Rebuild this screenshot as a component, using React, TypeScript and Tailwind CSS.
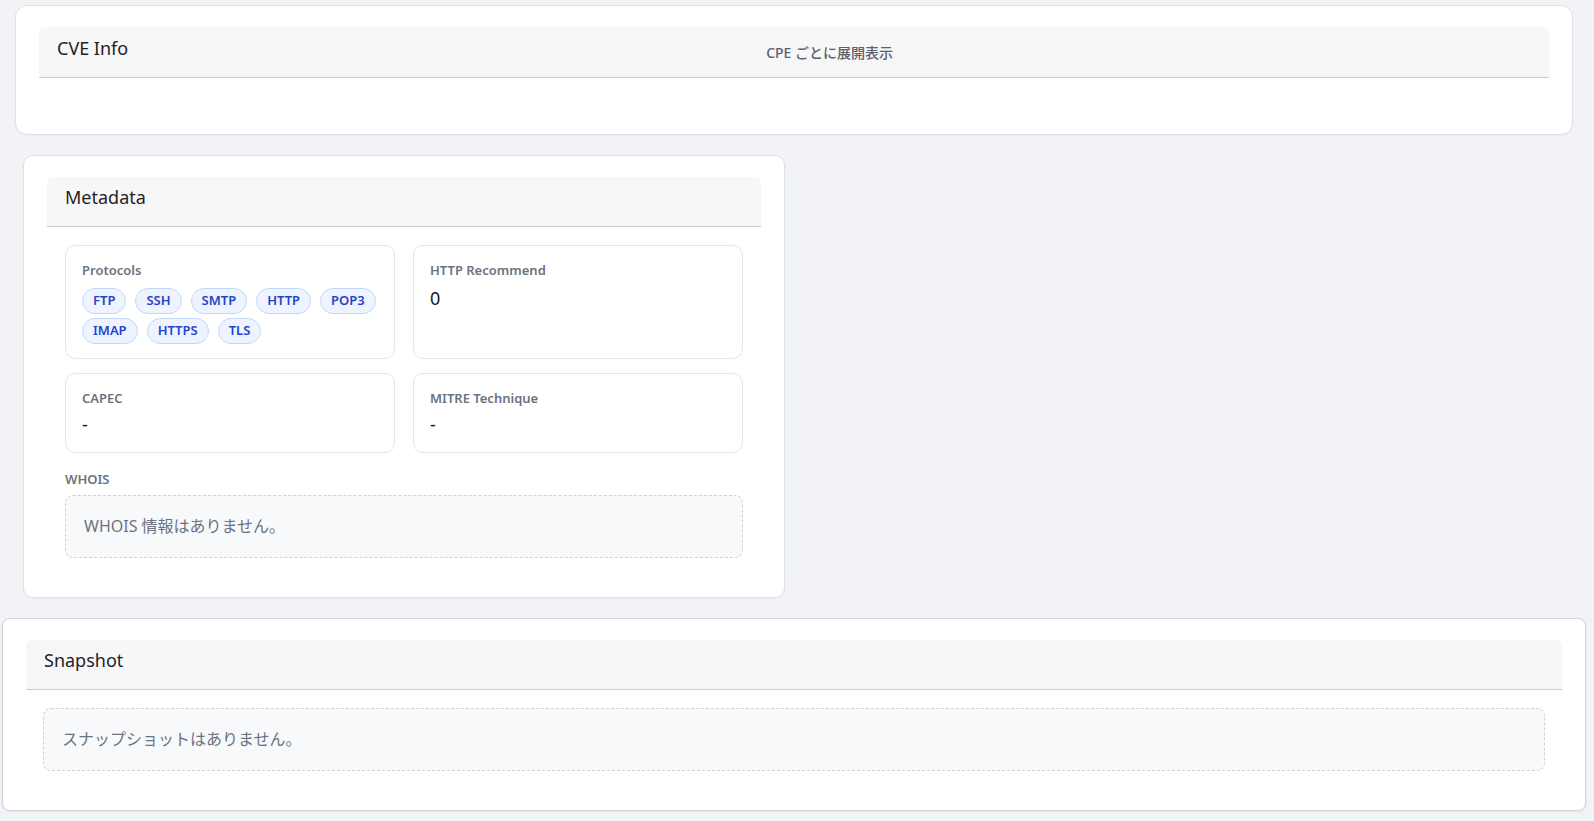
import React from "react";

const font = { fontFamily: '"Noto Sans", "Noto Sans CJK JP", sans-serif' };

function Header({ title, extra, cve }: { title: string; extra?: React.ReactNode; cve?: boolean }) {
  return (
    <div
      className={`flex items-start bg-[#f7f7f7] border-b border-[#cdcdcd] rounded-t-[6px] px-[18px] ${
        cve ? "h-[51px]" : "h-[50px]"
      }`}
    >
      <div className={`text-[18px] leading-7 text-[#1f2328] ${cve ? "mt-[7px]" : "mt-[6px]"}`}>{title}</div>
      {extra}
    </div>
  );
}

function InfoCard({ label, children }: { label: string; children: React.ReactNode }) {
  return (
    <div className="border border-[#e4e6ea] rounded-[10px] px-4 py-[14px] bg-white">
      <div className="text-[13px] leading-5 font-semibold text-[#6b7280]">{label}</div>
      {children}
    </div>
  );
}

const protocols = ["FTP", "SSH", "SMTP", "HTTP", "POP3", "IMAP", "HTTPS", "TLS"];

export default function App() {
  return (
    <div className="min-h-[821px] bg-[#f2f3f7] pt-[5px] pb-[11px] flex flex-col" style={font}>
      {/* CVE Info */}
      <div className="ml-[15px] mr-[21px] bg-white border border-[#dde0e6] rounded-[12px] px-[23px] pt-[21px] pb-[21px] shadow-[0_1px_2px_rgba(0,0,0,0.03)]">
        <Header
          title="CVE Info"
          cve
          extra={
            <div className="flex-1 self-center text-center text-[14px] leading-5 font-medium text-[#5a616d] mt-[1px]">
              CPE ごとに展開表示
            </div>
          }
        />
        <div className="h-[35px]" />
      </div>

      {/* Metadata */}
      <div className="mt-[20px] ml-[23px] w-[762px] bg-white border border-[#dde0e6] rounded-[10px] px-[23px] py-[21px] shadow-[0_1px_2px_rgba(0,0,0,0.03)]">
        <Header title="Metadata" />
        <div className="p-[18px]">
          <div className="grid grid-cols-2 gap-x-[18px] gap-y-[14px]">
            <InfoCard label="Protocols">
              <div className="mt-[8px] flex flex-wrap gap-x-[9px] gap-y-[4px]">
                {protocols.map((p) => (
                  <span
                    key={p}
                    className="inline-flex items-center h-[26px] px-[10px] rounded-full border border-[#c3d7fb] bg-[#eef4ff] text-[13px] font-semibold text-[#2443c9]"
                  >
                    {p}
                  </span>
                ))}
              </div>
            </InfoCard>
            <InfoCard label="HTTP Recommend">
              <div className="mt-[4px] text-[18px] leading-7 text-[#111827]">0</div>
            </InfoCard>
            <InfoCard label="CAPEC">
              <div className="mt-[2px] text-[18px] leading-7 text-[#111827]">-</div>
            </InfoCard>
            <InfoCard label="MITRE Technique">
              <div className="mt-[2px] text-[18px] leading-7 text-[#111827]">-</div>
            </InfoCard>
          </div>
          <div className="mt-[16px] text-[13px] leading-5 font-semibold text-[#6b7280]">WHOIS</div>
          <div className="mt-[6px] border border-dashed border-[#cfd3da] rounded-[8px] bg-[#f8f9fb] px-[18px] py-[18px] text-[16px] leading-[25px] text-[#6b7280]">
            WHOIS 情報はありません。
          </div>
        </div>
      </div>

      {/* Snapshot */}
      <div className="mt-[20px] ml-[2px] mr-[8px] bg-white border border-[#cfd2d7] rounded-[8px] px-[23px] py-[21px] shadow-[0_1px_3px_rgba(0,0,0,0.05)]">
        <Header title="Snapshot" />
        <div className="pt-[18px] pb-[18px] px-[17px]">
          <div className="border border-dashed border-[#cfd3da] rounded-[8px] bg-[#f8f9fb] px-[18px] py-[18px] text-[16px] leading-[25px] text-[#6b7280]">
            スナップショットはありません。
          </div>
        </div>
      </div>
    </div>
  );
}
